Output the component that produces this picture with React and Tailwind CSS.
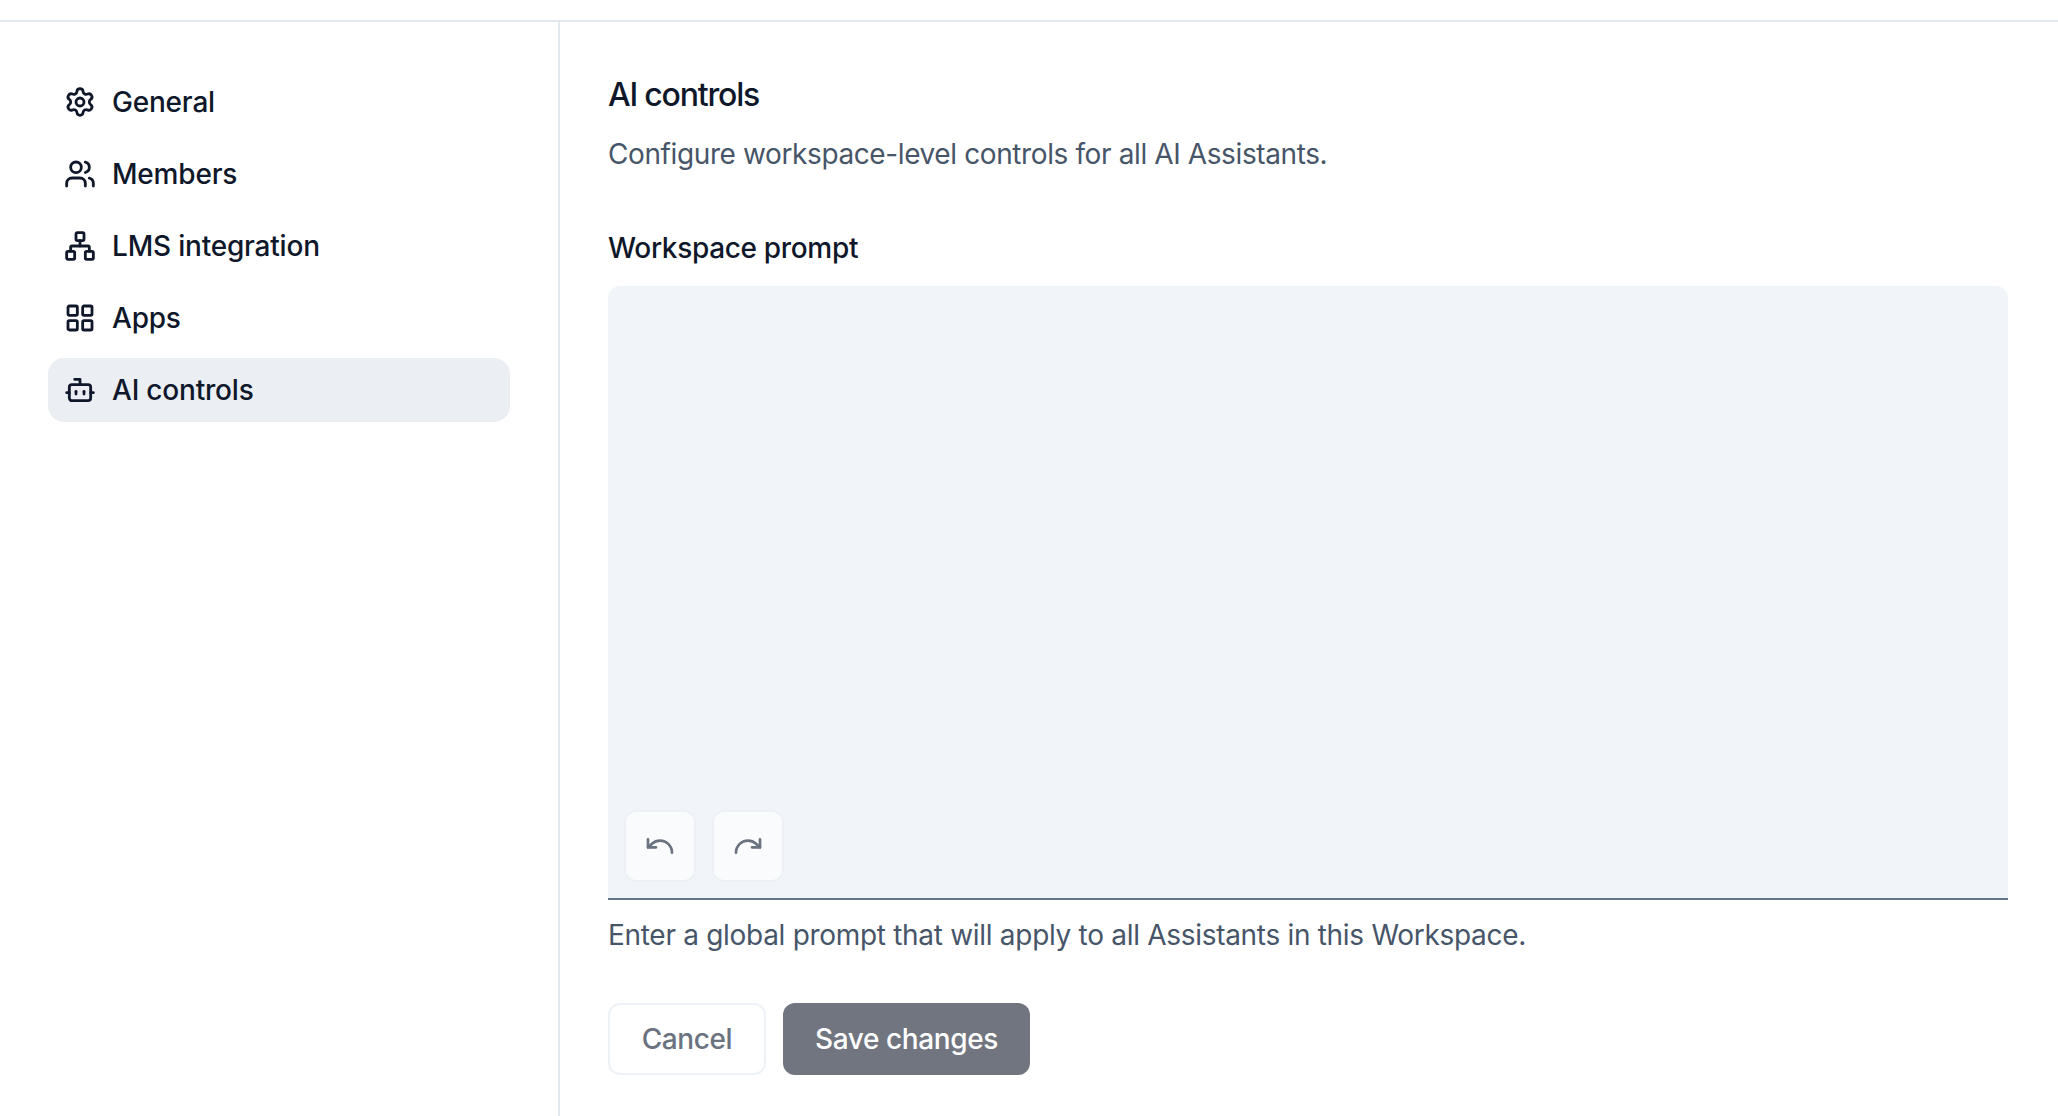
import { Settings, Users, Network, LayoutGrid, Bot, Undo, Redo } from "lucide-react";

const navItems = [
  { label: "General", icon: Settings },
  { label: "Members", icon: Users },
  { label: "LMS integration", icon: Network },
  { label: "Apps", icon: LayoutGrid },
  { label: "AI controls", icon: Bot, active: true },
];

export default function App() {
  return (
    <div className="h-screen w-full flex flex-col overflow-hidden bg-white font-['Inter',sans-serif]">
      {/* Top bar edge */}
      <div className="h-[22px] shrink-0 border-b-2 border-[#e2e8f0]" />

      <div className="flex-1 flex min-h-0">
        {/* Sidebar */}
        <aside className="w-[560px] shrink-0 border-r-2 border-[#e2e8f0] pt-12 px-12">
          <nav className="flex flex-col gap-2">
            {navItems.map((item) => (
              <div
                key={item.label}
                className={`h-16 flex items-center gap-4 pl-4 rounded-2xl text-[28px] tracking-[-0.2px] font-medium text-[#0f172a] ${
                  item.active ? "bg-[#ebeef3]" : ""
                }`}
              >
                <item.icon size={32} strokeWidth={2.1} />
                <span>{item.label}</span>
              </div>
            ))}
          </nav>
        </aside>

        {/* Main */}
        <main className="flex-1 min-w-0 pl-12 pr-[50px] pt-[53px]">
          <h1 className="text-[32px] leading-10 font-medium tracking-[-1.2px] text-[#0f172a]">AI controls</h1>
          <p className="mt-[19px] text-[28px] leading-10 tracking-[-0.39px] text-[#475569]">
            Configure workspace-level controls for all AI Assistants.
          </p>

          <label className="block mt-[54px] text-[28px] leading-10 tracking-[-0.33px] font-medium text-[#0f172a]">Workspace prompt</label>
          <div className="mt-[18px] h-[614px] flex flex-col justify-end rounded-t-xl bg-[#f1f5f9] border-b-2 border-[#64748b] p-4">
            <div className="flex gap-4">
              <button className="w-[72px] h-[72px] flex items-center justify-center rounded-xl border-2 border-[#edf0f5] bg-[#fafbfd] text-[#6b7280]">
                <Undo size={32} strokeWidth={2} />
              </button>
              <button className="w-[72px] h-[72px] flex items-center justify-center rounded-xl border-2 border-[#edf0f5] bg-[#fafbfd] text-[#6b7280]">
                <Redo size={32} strokeWidth={2} />
              </button>
            </div>
          </div>
          <p className="mt-[15px] text-[28px] leading-10 tracking-[-0.3px] text-[#475569]">
            Enter a global prompt that will apply to all Assistants in this Workspace.
          </p>

          <div className="mt-12 flex gap-[17px]">
            <button className="w-[158px] h-[72px] rounded-xl border-2 border-[#eef1f6] bg-white text-[28px] tracking-[-0.4px] font-medium text-[#6b7280]">
              Cancel
            </button>
            <button className="w-[247px] h-[72px] rounded-xl bg-[#71757f] text-[28px] tracking-[-0.4px] font-medium text-white">
              Save changes
            </button>
          </div>
        </main>
      </div>
    </div>
  );
}
